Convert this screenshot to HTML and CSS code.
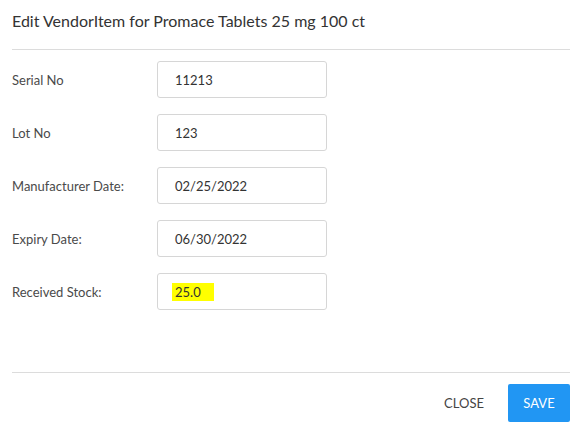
FILE: index.html
```html
<!DOCTYPE html>
<html>
<head>
<meta charset="utf-8">
<link rel="stylesheet" href="styles.css">
</head>
<body>
<div class="dialog">
  <div class="header">
    <h2 class="title">Edit VendorItem for Promace Tablets 25 mg 100 ct</h2>
  </div>
  <div class="body">
    <div class="row"><label class="label">Serial No</label><div class="input">11213</div></div>
    <div class="row"><label class="label">Lot No</label><div class="input">123</div></div>
    <div class="row"><label class="label">Manufacturer Date:</label><div class="input">02/25/2022</div></div>
    <div class="row"><label class="label">Expiry Date:</label><div class="input">06/30/2022</div></div>
    <div class="row"><label class="label">Received Stock:</label><div class="input"><span class="hl">25.0</span></div></div>
  </div>
  <div class="footer">
    <button class="btn btn-close">CLOSE</button>
    <button class="btn btn-save">SAVE</button>
  </div>
</div>
</body>
</html>
```
FILE: styles.css
```css
html, body {
  margin: 0;
  padding: 0;
  background: #fff;
}
body {
  font-family: Lato, "Open Sans", sans-serif;
  color: #333;
}
.dialog {
  width: 558px;
  padding: 0 15px 0 12px;
}
.header {
  height: 50px;
  border-bottom: 1px solid #dcdcdc;
  box-sizing: border-box;
  display: flex;
  align-items: center;
}
.title {
  margin: 0;
  font-size: 16px;
  font-weight: 400;
  color: #333;
  position: relative;
  top: -4px;
}
.body {
  padding-top: 11px;
  height: 323px;
  box-sizing: border-box;
  border-bottom: 1px solid #dcdcdc;
  display: flex;
  flex-direction: column;
  gap: 16px;
}
.row {
  display: flex;
  align-items: center;
  height: 37px;
}
.label {
  width: 145px;
  font-size: 13px;
  color: #4a4a4a;
}
.input {
  width: 170px;
  height: 37px;
  box-sizing: border-box;
  border: 1px solid #d6d6d6;
  border-radius: 3px;
  padding: 0 13px 0 17px;
  display: flex;
  align-items: center;
  font-size: 13px;
  color: #333;
}
.hl {
  background: #ffff00;
  padding: 1px 13px 1px 3px;
  margin-left: -3px;
}
.footer {
  display: flex;
  justify-content: flex-end;
  align-items: center;
  gap: 6px;
  padding-top: 11px;
}
.btn {
  font-family: inherit;
  font-size: 13px;
  border: none;
  border-radius: 2px;
  height: 38px;
  cursor: pointer;
}
.btn-close {
  background: transparent;
  color: #444;
  width: 76px;
}
.btn-save {
  background: #2196f3;
  color: #fff;
  width: 62px;
}
```
